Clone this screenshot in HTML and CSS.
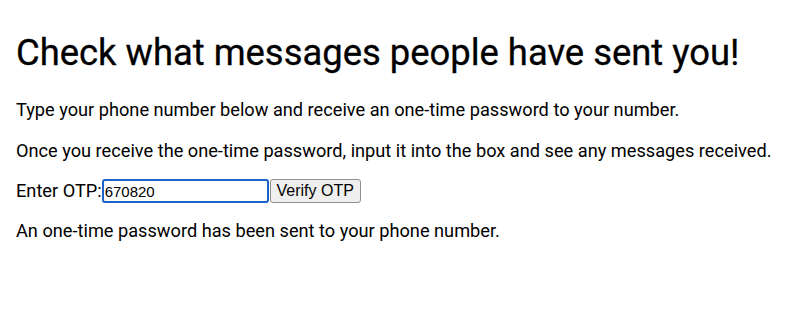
FILE: index.html
```html
<!DOCTYPE html>
<html>
<head>
<meta charset="utf-8">
<link rel="stylesheet" href="styles.css">
</head>
<body>
<h1 class="title">Check what messages people have sent you!</h1>
<p class="text">Type your phone number below and receive an one-time password to your number.</p>
<p class="text">Once you receive the one-time password, input it into the box and see any messages received.</p>
<div class="otp-row">
<label class="otp-label" for="otp">Enter OTP:</label><input id="otp" class="otp-input" type="text" value="670820"><button class="otp-btn">Verify OTP</button>
</div>
<p class="text">An one-time password has been sent to your phone number.</p>
</body>
</html>
```
FILE: styles.css
```css
body {
  margin: 0;
  padding: 31px 16px 0;
  font-family: Roboto, "Liberation Sans", sans-serif;
  color: #000;
  background: #fff;
}
.title {
  font-size: 36.4px;
  line-height: 44px;
  font-weight: 400;
  margin: 0 0 24px;
  -webkit-text-stroke: 0.3px #000;
}
.text {
  font-size: 18.2px;
  line-height: 22px;
  margin: 0 0 19px;
}
.text + .text {
  margin-bottom: 17px;
}
.otp-row {
  display: flex;
  align-items: center;
  height: 24px;
  font-size: 18.2px;
  line-height: 22px;
  margin-bottom: 17px;
}
.otp-input {
  box-sizing: border-box;
  width: 167px;
  height: 24px;
  font-family: "Liberation Sans", Arial, sans-serif;
  font-size: 15px;
  border: 2px solid #1b63c6;
  border-radius: 3px;
  padding: 0 1px;
  outline: none;
  background: #fff;
}
.otp-btn {
  box-sizing: border-box;
  font-family: "Liberation Sans", Arial, sans-serif;
  font-size: 16px;
  height: 24px;
  width: 91px;
  padding: 0;
  margin-left: 1px;
  background: #efefef;
  border: 1px solid #8f8f8f;
  border-radius: 3px;
  color: #000;
}
```
